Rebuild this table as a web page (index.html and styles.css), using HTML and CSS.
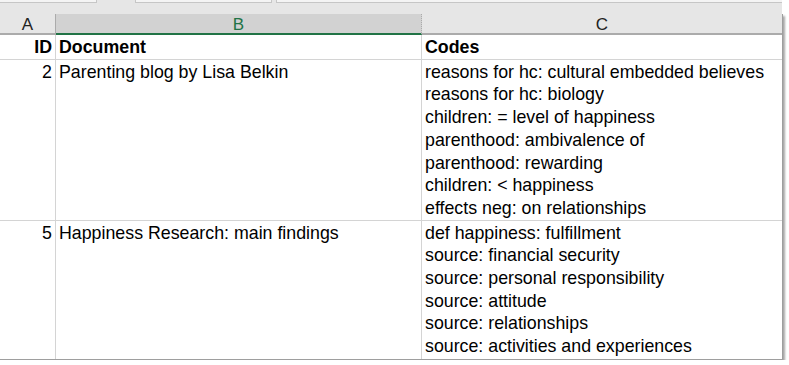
FILE: index.html
```html
<!DOCTYPE html>
<html lang="en">
<head>
    <meta charset="UTF-8">
    <title>Codes by document</title>
    <link rel="stylesheet" href="styles.css">
</head>
<body>
    <div class="tabs">
        <div class="tab tab-first"></div>
        <div class="tab tab-mid"></div>
        <div class="tab tab-last"></div>
    </div>
    <div class="sheet">
        <div class="col-head">A</div>
        <div class="col-head selected">B</div>
        <div class="col-head last">C</div>

        <div class="cell num bold">ID</div>
        <div class="cell bold">Document</div>
        <div class="cell bold last">Codes</div>

        <div class="cell num">2</div>
        <div class="cell">Parenting blog by Lisa Belkin</div>
        <div class="cell last">
            <div>reasons for hc: cultural embedded believes</div>
            <div>reasons for hc: biology</div>
            <div>children: = level of happiness</div>
            <div>parenthood: ambivalence of</div>
            <div>parenthood: rewarding</div>
            <div>children: &lt; happiness</div>
            <div>effects neg: on relationships</div>
        </div>

        <div class="cell num end">5</div>
        <div class="cell end">Happiness Research: main findings</div>
        <div class="cell last end">
            <div>def happiness: fulfillment</div>
            <div>source: financial security</div>
            <div>source: personal responsibility</div>
            <div>source: attitude</div>
            <div>source: relationships</div>
            <div>source: activities and experiences</div>
        </div>
    </div>
</body>
</html>
```

FILE: styles.css
```css
body, html {
    margin: 0;
    padding: 0;
    background-color: #FFFFFF;
}
body {
    font-family: 'Liberation Sans', Arial, sans-serif;
    color: #000000;
}
.tabs {
    display: flex;
    height: 14px;
    background-color: #E6E6E6;
    width: 782px;
}
.tab {
    height: 2px;
    border-bottom: 1px solid #C6C6C6;
    background-color: #F4F4F4;
}
.tab-first {
    width: 96px;
    border-right: 1px solid #C6C6C6;
}
.tab-mid {
    width: 135px;
    margin-left: 38px;
    border-left: 1px solid #C6C6C6;
    border-right: 1px solid #C6C6C6;
}
.tab-last {
    flex: 1;
    margin-left: 4px;
    border-left: 1px solid #C6C6C6;
}
.sheet {
    display: grid;
    grid-template-columns: 56px 366px 360px;
    width: 782px;
    box-shadow: 2px 2px 2px rgba(0, 0, 0, 0.35);
    border-right: 1px solid #9E9E9E;
    border-bottom: 1px solid #9E9E9E;
}
.col-head {
    height: 19px;
    background-color: #E6E6E6;
    border-bottom: 2px solid #ABABAB;
    border-right: 1px solid #ABABAB;
    text-align: center;
    font-size: 17px;
    line-height: 21px;
    color: #222222;
}
.col-head.selected {
    background-color: #D2D2D2;
    border-bottom-color: #217346;
    color: #217346;
    border-right: 1px dotted #ABABAB;
}
.col-head.last {
    border-right: none;
}
.cell {
    border-right: 1px solid #D4D4D4;
    border-bottom: 1px solid #D4D4D4;
    padding: 1px 3px 0;
    font-size: 17.8px;
    line-height: 22.7px;
    white-space: nowrap;
}
.cell.last {
    border-right: none;
}
.cell.end {
    border-bottom: none;
    height: 137px;
}
.num {
    text-align: right;
}
.bold {
    font-weight: bold;
}
```
